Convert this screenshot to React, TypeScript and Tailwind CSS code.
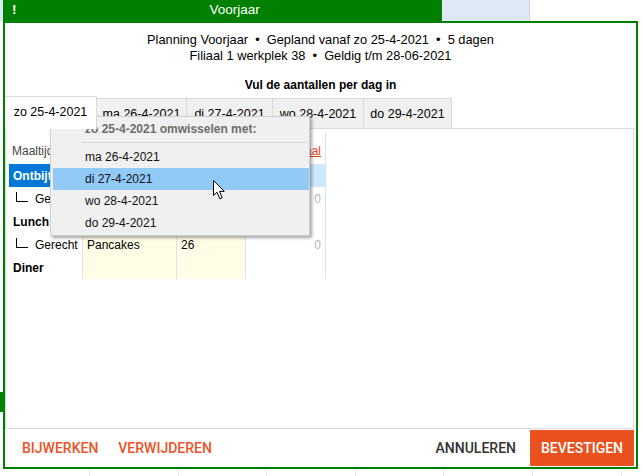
import React from 'react';

const tabs = [
  { label: 'zo 25-4-2021', w: 'w-[92px]' },
  { label: 'ma 26-4-2021', w: 'w-[90px]' },
  { label: 'di 27-4-2021', w: 'w-[86px]' },
  { label: 'wo 28-4-2021', w: 'w-[91px]' },
  { label: 'do 29-4-2021', w: 'w-[88px]' },
];

const swapOptions = ['ma 26-4-2021', 'di 27-4-2021', 'wo 28-4-2021', 'do 29-4-2021'];

type Row = {
  label: string;
  kind: 'meal' | 'dish';
  dish?: string;
  amount?: string;
  total?: string;
  selected?: boolean;
};

const rows: Row[] = [
  { label: 'Ontbijt', kind: 'meal', selected: true },
  { label: 'Gerecht', kind: 'dish', total: '0' },
  { label: 'Lunch', kind: 'meal' },
  { label: 'Gerecht', kind: 'dish', dish: 'Pancakes', amount: '26', total: '0' },
  { label: 'Diner', kind: 'meal' },
];

function Cursor() {
  return (
    <svg width="14" height="21" viewBox="0 0 14 21" className="absolute left-[213px] top-[180px]">
      <path
        d="M0.5 0.5 L0.5 15.5 L4 12.2 L6.8 18.8 L9.2 17.8 L6.5 11.4 L11.3 11.4 Z"
        fill="#ffffff"
        stroke="#000000"
        strokeWidth="1"
        strokeLinejoin="round"
      />
    </svg>
  );
}

function SwapMenu() {
  return (
    <div className="absolute left-[50px] top-[116px] w-[260px] h-[120px] bg-[#f0f0f0] border border-[#cfcfcf] shadow-[2px_2px_3px_rgba(0,0,0,0.35)] text-[12px]">
      <div className="h-[25px] pl-[34px] pt-[5px] font-bold text-[#6d6d6d] leading-[15px]">
        zo 25-4-2021 omwisselen met:
      </div>
      <div className="ml-[30px] mr-[1px] h-px bg-[#d7d7d7]" />
      <div className="pt-[3px]">
        {swapOptions.map(opt => (
          <div
            key={opt}
            className={
              'h-[22px] flex items-center pl-[32px] text-[#111] ml-[2px] ' +
              (opt === 'di 27-4-2021' ? 'bg-[#91c9f7]' : '')
            }
          >
            {opt}
          </div>
        ))}
      </div>
    </div>
  );
}

function MealTable() {
  return (
    <div className="pl-[3px] pt-[3px] text-[12px] text-black">
      {/* header */}
      <div className="flex h-[32px]">
        <div className="w-[74px] border-r border-[#d6e3f0] pl-[3px] pt-[10px] text-[#444]">Maaltijd</div>
        <div className="w-[94px] border-r border-[#d6e3f0]" />
        <div className="w-[69px] border-r border-[#d6e3f0]" />
        <div className="w-[80px] border-r border-[#d6e3f0] pr-[4px] pt-[10px] text-right">
          <span className="text-[#e8401c] underline">Totaal</span>
        </div>
      </div>
      {rows.map((r, i) => (
        <div key={i} className="flex h-[23px]">
          {r.kind === 'meal' ? (
            <div
              className={
                'w-[74px] border-r border-[#d6e3f0] pl-[4px] flex items-center font-bold ' +
                (r.selected ? 'bg-[#0078d7] text-white' : '')
              }
            >
              {r.label}
            </div>
          ) : (
            <div className="w-[74px] border-r border-[#d6e3f0] flex items-center">
              <span className="inline-block w-[12px] h-[10px] ml-[7px] mr-[7px] border-l border-b border-black -mt-[4px]" />
              {r.label}
            </div>
          )}
          <div className="w-[94px] border-r border-[#d6e3f0] bg-[#fffde6] pl-[4px] flex items-center">{r.dish}</div>
          <div className="w-[69px] border-r border-[#d6e3f0] bg-[#fffde6] pl-[4px] flex items-center">{r.amount}</div>
          <div
            className={
              'w-[80px] border-r border-[#d6e3f0] pr-[4px] flex items-center justify-end text-[#b8b8b8] ' +
              (r.selected ? 'bg-[#cce8ff] border border-[#99d1ff]' : '')
            }
          >
            {r.total}
          </div>
        </div>
      ))}
    </div>
  );
}

export default function App() {
  return (
    <div className="relative w-[643px] h-[476px] bg-white overflow-hidden font-['Liberation_Sans',Arial,sans-serif]">
      {/* stuff behind the dialog */}
      <div className="absolute left-0 top-[392px] w-[4px] h-[20px] bg-[#008000]" />
      <div className="absolute left-0 top-[470px] w-[643px] h-[6px] flex">
        {[90, 89, 88, 89, 88, 89, 89].map((w, i) => (
          <div key={i} style={{ width: w }} className="h-full border-r border-[#e4e4e4]" />
        ))}
      </div>

      {/* title strip */}
      <div className="relative flex h-[21px]">
        <div className="w-[3px] bg-[#dde9f5]" />
        <div className="w-[439px] bg-[#008000] flex items-center text-white text-[13.5px]">
          <span className="pl-[9px] font-bold">!</span>
          <span className="ml-[193px]">Voorjaar</span>
        </div>
        <div className="w-[88px] bg-[#dde9f5] border-r border-[#c9d7e6]" />
      </div>

      {/* dialog */}
      <div className="relative ml-[3px] w-[635px] h-[448px] border-2 border-[#008000] bg-white flex flex-col">
        <div className="pt-[9px] text-center text-[12.8px] leading-[16px] text-black">
          <div>Planning Voorjaar&nbsp;&nbsp;•&nbsp;&nbsp;Gepland vanaf zo 25-4-2021&nbsp;&nbsp;•&nbsp;&nbsp;5 dagen</div>
          <div>Filiaal 1 werkplek 38&nbsp;&nbsp;•&nbsp;&nbsp;Geldig t/m 28-06-2021</div>
        </div>
        <div className="mt-[13px] text-center text-[12px] leading-[16px] font-bold text-black">
          Vul de aantallen per dag in
        </div>

        {/* tabs */}
        <div className="mt-[3px] flex items-end h-[32px] text-[12.5px] text-black">
          {tabs.map((t, i) =>
            i === 0 ? (
              <div
                key={t.label}
                className={t.w + ' relative z-10 h-[33px] -mb-px bg-white border-t border-r border-[#d9d9d9] flex items-center justify-center pb-[2px]'}
              >
                {t.label}
              </div>
            ) : (
              <div
                key={t.label}
                className={t.w + ' h-[30px] bg-[#f0f0f0] border-t border-r border-[#d9d9d9] flex items-center justify-center pt-[1px]'}
              >
                {t.label}
              </div>
            )
          )}
        </div>

        {/* panel */}
        <div className="mr-[2px] h-[301px] border border-[#d9d9d9]">
          <MealTable />
        </div>

        {/* bottom buttons */}
        <div className="flex-1 flex items-center pr-[2px] font-['Roboto',sans-serif] font-medium text-[14px]">
          <span className="ml-[17px] text-[#ec5325]">BIJWERKEN</span>
          <span className="ml-[20px] text-[#ec5325]">VERWIJDEREN</span>
          <span className="ml-auto mr-[14px] text-[#333333]">ANNULEREN</span>
          <div className="w-[104px] h-[36px] bg-[#e9521f] text-white flex items-center justify-center">BEVESTIGEN</div>
        </div>
      </div>

      <SwapMenu />
      <Cursor />
    </div>
  );
}
